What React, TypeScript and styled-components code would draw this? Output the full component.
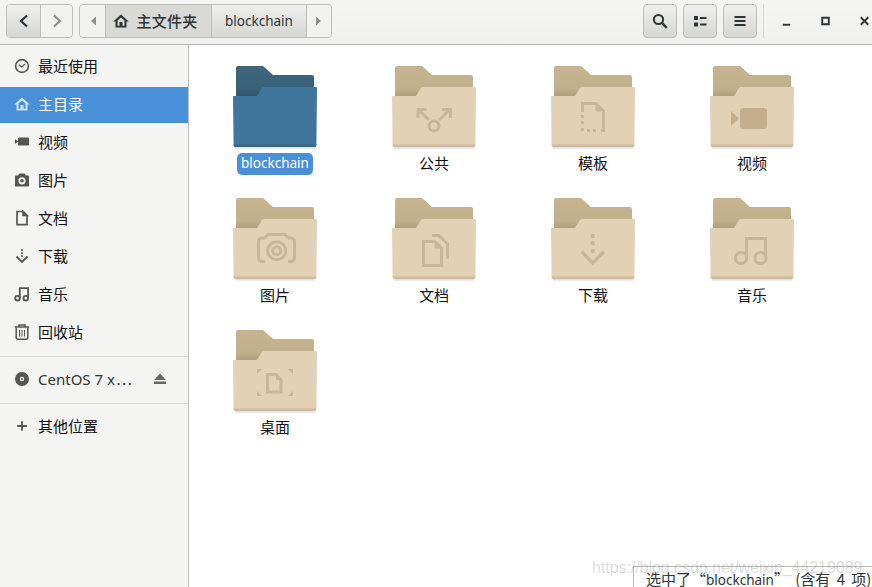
import { ReactNode } from 'react';
import styled, { createGlobalStyle } from 'styled-components';

const GlobalStyle = createGlobalStyle`
  html, body {
    margin: 0;
    height: 100%;
    overflow: hidden;
    background: #fff;
  }
  #root {
    height: 100%;
  }
`;

const Window = styled.div`
  position: relative;
  display: flex;
  flex-direction: column;
  width: 872px;
  height: 587px;
  overflow: hidden;
  font-family: 'Noto Sans', 'Noto Sans CJK SC', sans-serif;
  font-size: 15px;
  color: #111;
`;

const HeaderBar = styled.header`
  display: flex;
  align-items: flex-start;
  flex: none;
  height: 45px;
  box-sizing: border-box;
  padding: 4px 0 0 6px;
  background: linear-gradient(#f5f5f4, #f0f0ee);
  border-bottom: 1px solid #b4b4b0;
`;

const ButtonGroup = styled.div<{ $gap?: number }>`
  display: flex;
  height: 34px;
  box-sizing: border-box;
  margin-right: ${(p) => p.$gap ?? 0}px;
  border: 1px solid #bdbdb9;
  border-radius: 4px;
  overflow: hidden;
`;

const Segment = styled.div<{ $width: number; $tone?: 'raised' | 'flat' | 'pressed' }>`
  display: flex;
  align-items: center;
  justify-content: center;
  gap: 7px;
  width: ${(p) => p.$width}px;
  box-sizing: border-box;
  padding-bottom: 1px;
  color: #2e3436;
  font-size: 13.5px;
  background: ${(p) =>
    p.$tone === 'raised'
      ? 'linear-gradient(#efefed, #d6d6d2)'
      : p.$tone === 'pressed'
        ? '#d9d9d6'
        : '#f2f2f0'};
  & + & {
    border-left: 1px solid #bdbdb9;
  }
`;

const PathCurrent = styled.span`
  margin-right: 6px;
  font-size: 15px;
  font-weight: 500;
  letter-spacing: 0.3px;
  color: #2e3436;
`;

const ToolButton = styled.div`
  display: flex;
  align-items: center;
  justify-content: center;
  width: 34px;
  height: 34px;
  box-sizing: border-box;
  margin-right: 6px;
  border: 1px solid #bdbdb9;
  border-radius: 4px;
  background: linear-gradient(#efefed, #d6d6d2);
  &:last-of-type {
    margin-right: 0;
  }
`;

const Tools = styled.div`
  display: flex;
  margin-left: auto;
`;

const TitleDivider = styled.div`
  width: 1px;
  height: 34px;
  margin: 0 15px 0 6px;
  background: #d6d6d3;
`;

const WindowButtons = styled.div`
  display: flex;
  align-items: center;
  gap: 24px;
  height: 34px;
  width: 93px;
  flex: none;
`;

const Body = styled.div`
  display: flex;
  flex: 1;
  min-height: 0;
`;

const Sidebar = styled.nav`
  flex: none;
  width: 189px;
  box-sizing: border-box;
  padding-top: 4px;
  background: #f4f4f3;
  border-right: 1px solid #bcbcb9;
`;

const SideRow = styled.div<{ $active?: boolean }>`
  display: flex;
  align-items: center;
  gap: 8px;
  height: 36px;
  box-sizing: border-box;
  margin-bottom: 2px;
  padding: 0 14px 4px;
  color: ${(p) => (p.$active ? '#fff' : '#111')};
  background: ${(p) => (p.$active ? '#4a90d9' : 'transparent')};
  svg {
    flex: none;
    margin-top: 2px;
  }
`;

const Separator = styled.div`
  height: 1px;
  margin: 5px 0 5px;
  background: #d9d9d6;
`;

const TruncatedName = styled.span`
  color: #2e3436;
`;

const Dots = styled.span`
  font-family: 'Noto Sans CJK SC', sans-serif;
  margin-left: 1px;
`;

const EjectSlot = styled.span`
  display: flex;
  margin-left: auto;
  margin-right: 6px;
`;

const Grid = styled.main`
  flex: 1;
  display: grid;
  grid-template-columns: repeat(4, 159px);
  grid-auto-rows: 132px;
  align-content: start;
  padding: 21px 0 0 6.5px;
`;

const Cell = styled.div`
  display: flex;
  flex-direction: column;
  align-items: center;
`;

const FolderArt = styled.svg`
  display: block;
  flex: none;
`;

const Label = styled.span<{ $selected?: boolean }>`
  display: flex;
  align-items: center;
  height: 22px;
  box-sizing: border-box;
  padding: 0 4px 3px;
  border-radius: 5px;
  font-size: ${(p) => (p.$selected ? '13.5px' : '15px')};
  color: ${(p) => (p.$selected ? '#fff' : '#111')};
  background: ${(p) => (p.$selected ? '#4a90d9' : 'transparent')};
`;

const StatusFloat = styled.div`
  position: absolute;
  left: 633px;
  top: 566px;
  width: 260px;
  height: 21px;
  box-sizing: border-box;
  padding-left: 12px;
  background: #fff;
  border: 1px solid #b8b8b4;
  border-width: 1px 0 0 1px;
  font-family: 'Noto Sans CJK SC', 'Noto Sans', sans-serif;
  font-size: 15px;
  line-height: 24px;
  word-spacing: 3px;
  white-space: nowrap;
  color: #2e3436;
`;

const StatusName = styled.span`
  font-family: 'Noto Sans', sans-serif;
  font-size: 13.5px;
`;

const Watermark = styled.div`
  position: absolute;
  left: 592px;
  top: 558px;
  font-family: 'Liberation Sans', sans-serif;
  font-size: 16px;
  line-height: 20px;
  letter-spacing: -0.05px;
  white-space: nowrap;
  color: rgba(130, 130, 130, 0.28);
  pointer-events: none;
`;

const Glyph = ({ children, size = 16, color = '#555' }: { children: ReactNode; size?: number; color?: string }) => (
  <svg width={size} height={size} viewBox="0 0 16 16" fill={color} stroke="none">
    {children}
  </svg>
);

const homePath = 'M8 1.5 15.7 8.6H13.5V14.5H2.5V8.6H.3ZM8 4.4 4.5 7.6V12.7H6.5V9H9.5V12.7H11.5V7.6Z';

const HomeIcon = ({ color }: { color: string }) => (
  <Glyph color={color}>
    <path d={homePath} fillRule="evenodd" />
  </Glyph>
);

const ChevronIcon = ({ dir, color }: { dir: 'left' | 'right'; color: string }) => (
  <svg width="16" height="16" viewBox="0 0 16 16" fill="none" stroke={color} strokeWidth="2.2">
    <path d={dir === 'left' ? 'M11 2.5 5 8l6 5.5' : 'M5 2.5 11 8l-6 5.5'} />
  </svg>
);

const TriIcon = ({ dir }: { dir: 'left' | 'right' }) => (
  <Glyph color="#8d8f8c">
    <path d={dir === 'left' ? 'M11 3.5V12.5L6 8Z' : 'M5 3.5V12.5L10 8Z'} />
  </Glyph>
);

const ClockIcon = () => (
  <svg width="16" height="16" viewBox="0 0 16 16" fill="none" stroke="#555" strokeWidth="1.6">
    <circle cx="8" cy="8" r="6.4" />
    <path d="M4.8 6.8 7.8 9l3.2-3" strokeWidth="1.2" />
  </svg>
);

const VideoIcon = () => (
  <Glyph>
    <path d="M5 3.5h9a1 1 0 0 1 1 1v6a1 1 0 0 1-1 1H5a1 1 0 0 1-1-1v-6a1 1 0 0 1 1-1ZM1 5l3 2.5L1 10Z" />
  </Glyph>
);

const CameraIcon = () => (
  <Glyph>
    <path
      fillRule="evenodd"
      d="M5.5 1.5h5L12 3.5h2a1 1 0 0 1 1 1V14a.5.5 0 0 1-.5.5h-13A.5.5 0 0 1 1 14V4.5a1 1 0 0 1 1-1h2ZM8 5.2a3.6 3.6 0 1 0 0 7.2 3.6 3.6 0 0 0 0-7.2ZM8 7a1.8 1.8 0 1 1 0 3.6A1.8 1.8 0 0 1 8 7Z"
    />
  </Glyph>
);

const DocIcon = () => (
  <svg width="16" height="16" viewBox="0 0 16 16" fill="none" stroke="#555" strokeWidth="1.7">
    <path d="M3 1.5h6l4 4v9.2H3Z" />
    <path d="M9 1.5v4h4Z" fill="#555" />
  </svg>
);

const DownloadIcon = () => (
  <svg width="16" height="16" viewBox="0 0 16 16" fill="#555" stroke="none">
    <circle cx="8" cy="2" r="1" />
    <circle cx="8" cy="5" r="1" />
    <circle cx="8" cy="8" r="1" />
    <path d="M2.5 8.5 8 14l5.5-5.5" fill="none" stroke="#555" strokeWidth="1.8" />
  </svg>
);

const MusicIcon = () => (
  <svg width="16" height="16" viewBox="0 0 16 16" fill="none" stroke="#555" strokeWidth="1.8">
    <circle cx="3.5" cy="12.2" r="2.3" />
    <circle cx="11.8" cy="12.2" r="2.3" />
    <path d="M5.8 12V2.2h8.3V12" />
  </svg>
);

const TrashIcon = () => (
  <svg width="16" height="16" viewBox="0 0 16 16" fill="none" stroke="#555" strokeWidth="1.5">
    <path d="M.8 3h14.4M5 3V1h6v2" />
    <path d="M2.2 3.5v10.3a1.4 1.4 0 0 0 1.4 1.4h8.8a1.4 1.4 0 0 0 1.4-1.4V3.5" />
    <path d="M5.5 6v6.5M8 6v6.5M10.5 6v6.5" strokeWidth="1" />
  </svg>
);

const DiscIcon = () => (
  <Glyph>
    <path
      fillRule="evenodd"
      d="M8 1a7 7 0 1 1 0 14A7 7 0 0 1 8 1Zm0 4.8a2.2 2.2 0 1 0 0 4.4 2.2 2.2 0 0 0 0-4.4Zm0 1.2a1 1 0 1 1 0 2 1 1 0 0 1 0-2Z"
    />
  </Glyph>
);

const EjectIcon = () => (
  <Glyph color="#666">
    <path d="M8 2.5 14 9H2ZM2 10.5h12V13H2Z" />
  </Glyph>
);

const PlusIcon = () => (
  <svg width="16" height="16" viewBox="0 0 16 16" fill="none" stroke="#555" strokeWidth="1.8">
    <path d="M8 3.2v9.6M3.2 8h9.6" />
  </svg>
);

const SearchIcon = () => (
  <svg width="16" height="16" viewBox="0 0 16 16" fill="none" stroke="#2e3436" strokeWidth="2">
    <circle cx="6.5" cy="6.5" r="4.6" />
    <path d="M10 10l4.8 4.8" strokeWidth="2.4" />
  </svg>
);

const ListIcon = () => (
  <Glyph color="#2e3436">
    <path d="M2 3h4v4H2ZM2 9.5h4v4H2ZM8 4h6.5v2H8ZM8 10.5h6.5v2H8Z" />
  </Glyph>
);

const MenuIcon = () => (
  <Glyph color="#2e3436">
    <path d="M2.5 3h11v2h-11ZM2.5 7h11v2h-11ZM2.5 11h11v2h-11Z" />
  </Glyph>
);

const glyphTone = '#c9b699';

const SharedGlyph = () => (
  <g fill="none" stroke={glyphTone} strokeWidth="3">
    <circle cx="42" cy="60" r="5" />
    <path d="M37 54 27 44M26 52V43.5H34.5M47 54 58 43.5M50 43.5H58.5V52" />
  </g>
);

const TemplateGlyph = () => (
  <g fill="none" stroke={glyphTone} strokeWidth="3">
    <path d="M31.5 46V37.5H45L52.5 45V64.5H50" />
    <path d="M45 37v8h8Z" fill={glyphTone} strokeWidth="1" />
    <path d="M30 49h3v3h-3ZM30 55h3v3h-3ZM30 62h3v3h-3ZM36 63h3v3h-3ZM42 63h3v3h-3Z" fill={glyphTone} stroke="none" />
  </g>
);

const VideoGlyph = () => (
  <g fill="#c5ae8d">
    <rect x="30" y="42" width="27" height="21" rx="3" />
    <path d="M21 45 29 52.5 21 60Z" />
  </g>
);

const CameraGlyph = () => (
  <g fill="none" stroke={glyphTone} strokeWidth="3">
    <path d="M32 40H29.5Q25.5 40 25.5 44V59Q25.5 63.5 29.5 63.5H32M55 40H57.5Q61.5 40 61.5 44V59Q61.5 63.5 57.5 63.5H55M32 40 35 36.5H52L55 40" />
    <circle cx="43.7" cy="52.7" r="9" />
    <circle cx="43.7" cy="52.7" r="4" />
  </g>
);

const DocsGlyph = () => (
  <g fill="none" stroke={glyphTone} strokeWidth="3">
    <path d="M31.5 43.5H43L49.5 50V67.5H31.5Z" />
    <path d="M43 43v7h7Z" fill={glyphTone} strokeWidth="1" />
    <path d="M40 37.5H47L55.5 46V60.5" />
  </g>
);

const DownloadGlyph = () => (
  <g fill={glyphTone}>
    <circle cx="41.7" cy="38" r="2.2" />
    <circle cx="41.7" cy="45.3" r="2.2" />
    <circle cx="41.7" cy="53" r="2.2" />
    <path d="M30.7 53.7 41.7 65 53 53.7" fill="none" stroke={glyphTone} strokeWidth="3.4" />
  </g>
);

const MusicGlyph = () => (
  <g fill="none" stroke={glyphTone} strokeWidth="3">
    <circle cx="31" cy="60" r="5.6" />
    <circle cx="50.5" cy="60" r="5.6" />
    <path d="M36.5 60V40.5H55.5V60" />
  </g>
);

const DesktopGlyph = () => (
  <g fill={glyphTone}>
    <path d="M24 39h5l-5 5ZM60 39h-5l5 5ZM24 66h5l-5-5ZM60 66h-5l5-5Z" />
    <path d="M34.5 44.5H43L48 50V62H34.5Z" fill="none" stroke={glyphTone} strokeWidth="3" />
    <path d="M43 44v6h6Z" />
  </g>
);

const Folder = ({ id, blue, children }: { id: string; blue?: boolean; children?: ReactNode }) => (
  <FolderArt width="84" height="87" viewBox="0 0 84 87">
    <defs>
      <linearGradient id={`back-${id}`} x1="0" y1="0" x2="0" y2="1">
        <stop offset="0" stopColor={blue ? '#3c677e' : '#c6b48f'} />
        <stop offset="0.7" stopColor={blue ? '#38617a' : '#c2b08c'} />
        <stop offset="1" stopColor={blue ? '#2f5166' : '#ad9a79'} />
      </linearGradient>
      <linearGradient id={`shade-${id}`} x1="0" y1="0" x2="0" y2="1">
        <stop offset="0" stopColor="#000" stopOpacity="0.2" />
        <stop offset="1" stopColor="#000" stopOpacity="0" />
      </linearGradient>
    </defs>
    <path d="M2 80H82V84H2Z" fill={`url(#shade-${id})`} />
    <path d="M5 0H30L40 9H79Q81 9 81 11V32H3V2Q3 0 5 0Z" fill={`url(#back-${id})`} />
    <path
      d="M1 30H24L29 22Q30 21 31 21H83Q84 21 84 22L83.4 79Q83.4 81 81.4 81H2.6Q.6 81 .6 79L0 31Q0 30 1 30Z"
      fill={blue ? '#41769c' : '#e3d1b6'}
    />
    <path d="M.6 78.5H83.4V79Q83.4 81 81.4 81H2.6Q.6 81 .6 79Z" fill={blue ? '#38657f' : '#cfbb9c'} />
    {children}
  </FolderArt>
);

const folders: { id: string; name: string; art?: ReactNode; blue?: boolean }[] = [
  { id: 'blockchain', name: 'blockchain', blue: true },
  { id: 'shared', name: '公共', art: <SharedGlyph /> },
  { id: 'template', name: '模板', art: <TemplateGlyph /> },
  { id: 'video', name: '视频', art: <VideoGlyph /> },
  { id: 'photo', name: '图片', art: <CameraGlyph /> },
  { id: 'docs', name: '文档', art: <DocsGlyph /> },
  { id: 'down', name: '下载', art: <DownloadGlyph /> },
  { id: 'music', name: '音乐', art: <MusicGlyph /> },
  { id: 'desk', name: '桌面', art: <DesktopGlyph /> },
];

const places: { name: string; icon: ReactNode }[] = [
  { name: '视频', icon: <VideoIcon /> },
  { name: '图片', icon: <CameraIcon /> },
  { name: '文档', icon: <DocIcon /> },
  { name: '下载', icon: <DownloadIcon /> },
  { name: '音乐', icon: <MusicIcon /> },
  { name: '回收站', icon: <TrashIcon /> },
];

const App = () => {
  return (
    <Window>
      <GlobalStyle />
      <HeaderBar>
        <ButtonGroup $gap={6}>
          <Segment $width={33} $tone="raised">
            <ChevronIcon dir="left" color="#2e3436" />
          </Segment>
          <Segment $width={32}>
            <ChevronIcon dir="right" color="#8d8f8c" />
          </Segment>
        </ButtonGroup>
        <ButtonGroup>
          <Segment $width={25}>
            <TriIcon dir="left" />
          </Segment>
          <Segment $width={106} $tone="pressed">
            <HomeIcon color="#2e3436" />
            <PathCurrent>主文件夹</PathCurrent>
          </Segment>
          <Segment $width={95} $tone="raised">
            blockchain
          </Segment>
          <Segment $width={25}>
            <TriIcon dir="right" />
          </Segment>
        </ButtonGroup>
        <Tools>
          <ToolButton>
            <SearchIcon />
          </ToolButton>
          <ToolButton>
            <ListIcon />
          </ToolButton>
          <ToolButton>
            <MenuIcon />
          </ToolButton>
        </Tools>
        <TitleDivider />
        <WindowButtons>
          <svg width="16" height="16" viewBox="0 0 16 16" fill="#2e3436">
            <path d="M4 11h8v2H4Z" />
          </svg>
          <svg width="16" height="16" viewBox="0 0 16 16" fill="none" stroke="#2e3436" strokeWidth="2">
            <path d="M4.5 4.5h7v7h-7Z" />
          </svg>
          <svg width="16" height="16" viewBox="0 0 16 16" fill="none" stroke="#2e3436" strokeWidth="2">
            <path d="M4 4l8 8M12 4l-8 8" />
          </svg>
        </WindowButtons>
      </HeaderBar>
      <Body>
        <Sidebar>
          <SideRow>
            <ClockIcon />
            最近使用
          </SideRow>
          <SideRow $active>
            <HomeIcon color="#cfe3f8" />
            主目录
          </SideRow>
          {places.map((place) => (
            <SideRow key={place.name}>
              {place.icon}
              {place.name}
            </SideRow>
          ))}
          <Separator />
          <SideRow>
            <DiscIcon />
            <TruncatedName>
              CentOS 7 x<Dots>⋯</Dots>
            </TruncatedName>
            <EjectSlot>
              <EjectIcon />
            </EjectSlot>
          </SideRow>
          <Separator />
          <SideRow>
            <PlusIcon />
            其他位置
          </SideRow>
        </Sidebar>
        <Grid>
          {folders.map((folder) => (
            <Cell key={folder.id}>
              <Folder id={folder.id} blue={folder.blue}>
                {folder.art}
              </Folder>
              <Label $selected={folder.blue}>{folder.name}</Label>
            </Cell>
          ))}
        </Grid>
      </Body>
      <StatusFloat>
        选中了“<StatusName>blockchain</StatusName>” (含有 4 项)
      </StatusFloat>
      <Watermark>https://blog.csdn.net/weixin_44219089</Watermark>
    </Window>
  );
};

export default App;
